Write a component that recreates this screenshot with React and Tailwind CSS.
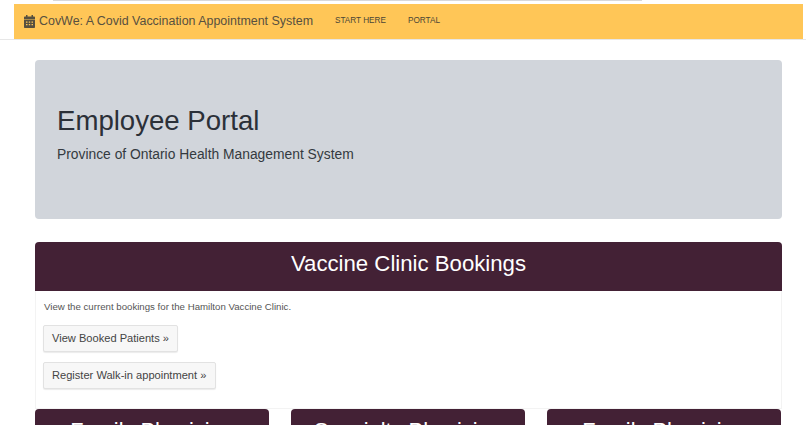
const cards = ["Family Physician", "Specialty Physician", "Family Physician"];

function CalendarIcon() {
  return (
    <svg className="w-[11px] h-[13px] mr-1 shrink-0" viewBox="0 0 11 13" fill="currentColor">
      <path d="M2 0h1.500v1.500h4V0H9v1.500h1c.6 0 1 .4 1 1V4.500H0V2.500c0-.6.4-1 1-1h1z" />
      <path fillRule="evenodd" d="M0 5h11v7c0 .6-.4 1-1 1H1c-.6 0-1-.4-1-1zm2 1.500v1.200h1.500V6.500zm2.800 0v1.200h1.400V6.500zm2.700 0v1.200H9V6.500zM2 9v1.200h1.500V9zm2.800 0v1.200h1.400V9zm2.700 0v1.200H9V9z" />
    </svg>
  );
}

export default function App() {
  return (
    <div className="h-[425px] w-[806px] overflow-hidden bg-white font-['Liberation_Sans',Arial,sans-serif] text-[#343a40]">
      <div className="h-[1px] ml-[53px] w-[589px] bg-[#d8d8da]" />
      <div className="mt-[3px] flex border-b border-[#e7e7e7] h-[36px]">
        <nav className="ml-[14px] w-[789px] h-[35px] bg-[#ffc657] flex items-center pl-[10px]">
          <a className="flex items-center text-[12.450px] text-[#575040] mr-[22px]">
            <CalendarIcon />
            CovWe: A Covid Vaccination Appointment System
          </a>
          <a className="text-[8.200px] text-[#4a4536] mr-[22px]">START HERE</a>
          <a className="text-[8.200px] text-[#4a4536]">PORTAL</a>
        </nav>
      </div>

      <div className="ml-[35px] w-[747px]">
        <section className="mt-[20px] h-[159px] bg-[#d1d5db] rounded-[4px] pl-[22px] pt-[44px]">
          <h1 className="text-[27.600px] leading-[34px] text-[#2b3038]">Employee Portal</h1>
          <p className="mt-[6px] text-[13.840px] leading-[20px] text-[#343a40]">Province of Ontario Health Management System</p>
        </section>

        <section className="mt-[23px] h-[167px] border-x border-b border-[#f3f3f3] rounded-t-[4px]">
          <div className="-mx-px h-[49px] pb-[5px] bg-[#432135] rounded-t-[4px] flex items-center justify-center text-[22.200px] text-white">
            Vaccine Clinic Bookings
          </div>
          <div className="pl-[7px] pt-[10px] flex flex-col items-start">
            <p className="pl-px text-[9.660px] leading-[12px] text-[#555]">View the current bookings for the Hamilton Vaccine Clinic.</p>
            <button className="mt-[12px] h-[27px] px-[8px] text-[11.100px] text-[#444] bg-[#f7f7f7] border border-[#e2e2e2] rounded-[2px] shadow-[0_1px_1px_rgba(0,0,0,0.08)]">
              View Booked Patients »
            </button>
            <button className="mt-[10px] h-[27px] pl-[8px] pr-[9px] text-[11.100px] text-[#444] bg-[#f7f7f7] border border-[#e2e2e2] rounded-[2px] shadow-[0_1px_1px_rgba(0,0,0,0.08)]">
              Register Walk-in appointment »
            </button>
          </div>
        </section>

        <div className="flex gap-[22px]">
          {cards.map((title, i) => (
            <div key={i} className="w-[234px] h-[49px] pb-[5px] bg-[#432135] rounded-t-[4px] text-white text-[21.800px] flex items-center justify-center">
              {title}
            </div>
          ))}
        </div>
      </div>
    </div>
  );
}
